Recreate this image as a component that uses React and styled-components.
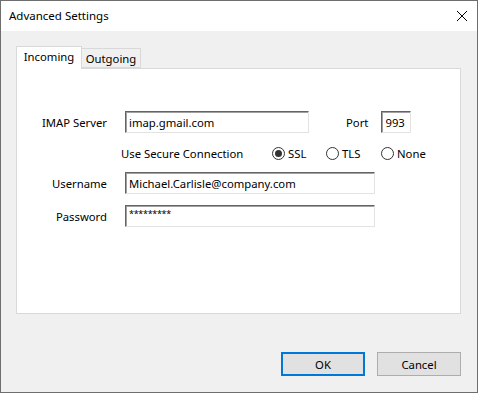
import React from "react";
import styled, { createGlobalStyle } from "styled-components";

const Global = createGlobalStyle`
  html, body { margin: 0; padding: 0; background: #ffffff; }
  * { box-sizing: border-box; }
  body { font-family: "Noto Sans", "Segoe UI", Arial, sans-serif; font-size: 11.3px; color: #000; }
`;

const Window = styled.div`
  width: 478px;
  height: 393px;
  border: 1px solid #6e6e6e;
  display: flex;
  flex-direction: column;
  background: #f0f0f0;
`;

const TitleBar = styled.div`
  height: 30px;
  background: #ffffff;
  display: flex;
  align-items: center;
  justify-content: space-between;
  padding: 0 9px 1px 8px;
  font-size: 11.5px;
`;

const Close = styled.div`
  width: 12px;
  height: 12px;
  display: flex;
  svg { display: block; }
`;

const Body = styled.div`
  flex: 1;
  display: flex;
  flex-direction: column;
  padding: 15px 16px 0 15px;
`;

const Tabs = styled.div`
  display: flex;
  align-items: flex-end;
  height: 22px;
`;

const Tab = styled.div`
  width: ${(p) => p.$w}px;
  height: ${(p) => (p.$active ? "23px" : "20px")};
  margin-bottom: ${(p) => (p.$active ? "-1px" : "0")};
  padding-bottom: ${(p) => (p.$active ? "3px" : "0")};
  border: 1px solid #d9d9d9;
  border-bottom: ${(p) => (p.$active ? "none" : "1px solid #d9d9d9")};
  border-left: ${(p) => (p.$active ? "1px solid #d9d9d9" : "none")};
  background: ${(p) => (p.$active ? "#ffffff" : "#f0f0f0")};
  display: flex;
  align-items: center;
  justify-content: center;
  position: relative;
  z-index: ${(p) => (p.$active ? 1 : 0)};
`;

const Panel = styled.div`
  height: 246px;
  background: #ffffff;
  border: 1px solid #d9d9d9;
  padding: 42px 0 0 0;
  display: flex;
  flex-direction: column;
`;

const Row = styled.div`
  display: flex;
  align-items: center;
  height: ${(p) => p.$h || 22}px;
  margin-top: ${(p) => p.$mt || 0}px;
`;

const Label = styled.div`
  width: 90px;
  margin-right: ${(p) => 18 + (p.$inset || 0)}px;
  text-align: right;
  white-space: nowrap;
`;

const Input = styled.div`
  width: ${(p) => p.$w}px;
  height: 22px;
  background: #fff;
  border-style: solid;
  border-width: 1px;
  border-color: #646464 #e3e3e3 #e3e3e3 #646464;
  box-shadow: inset 1px 1px 0 #a0a0a0;
  padding: 0 3px;
  display: flex;
  align-items: center;
  white-space: nowrap;
  overflow: hidden;
  margin-left: ${(p) => p.$ml || 0}px;
`;

const Masked = styled.span`
  font-size: 9px;
  letter-spacing: -0.3px;
  margin-top: -5px;
`;

const Text = styled.div`
  width: ${(p) => (p.$w ? `${p.$w}px` : "auto")};
  margin-left: ${(p) => p.$ml || 0}px;
  white-space: nowrap;
`;

const Radio = styled.div`
  width: ${(p) => (p.$w ? `${p.$w}px` : "auto")};
  display: flex;
  align-items: center;
  gap: 3px;
`;

const Circle = styled.span`
  width: 13px;
  height: 13px;
  border: 1px solid #333;
  border-radius: 50%;
  display: flex;
  align-items: center;
  justify-content: center;
  &::after {
    content: "";
    width: 7px;
    height: 7px;
    border-radius: 50%;
    background: ${(p) => (p.$on ? "#333" : "transparent")};
  }
`;

const Footer = styled.div`
  display: flex;
  justify-content: flex-end;
  gap: 12px;
  margin-top: 38px;
`;

const Button = styled.div`
  width: 84px;
  height: 24px;
  background: #e1e1e1;
  border: ${(p) => (p.$default ? "2px solid #0078d7" : "1px solid #adadad")};
  display: flex;
  align-items: center;
  justify-content: center;
`;

export default function App() {
  return (
    <>
      <Global />
      <Window>
        <TitleBar>
          <span>Advanced Settings</span>
          <Close>
            <svg width="12" height="12" viewBox="0 0 12 12">
              <path d="M1 1 L11 11 M11 1 L1 11" stroke="#000" strokeWidth="1" fill="none" />
            </svg>
          </Close>
        </TitleBar>
        <Body>
          <Tabs>
            <Tab $active $w={66}>Incoming</Tab>
            <Tab $w={59}>Outgoing</Tab>
          </Tabs>
          <Panel>
            <Row>
              <Label $inset={2}>IMAP Server</Label>
              <Input $w={184} $ml={-2}>imap.gmail.com</Input>
              <Text $ml={37}>Port</Text>
              <Input $w={30} $ml={13}>993</Input>
            </Row>
            <Row $mt={12} $h={16}>
              <Text $ml={104} $w={151}>Use Secure Connection</Text>
              <Radio $w={54}><Circle $on />SSL</Radio>
              <Radio $w={55}><Circle />TLS</Radio>
              <Radio><Circle />None</Radio>
            </Row>
            <Row $mt={11}>
              <Label>Username</Label>
              <Input $w={250}>Michael.Carlisle@company.com</Input>
            </Row>
            <Row $mt={11}>
              <Label>Password</Label>
              <Input $w={250}><Masked>*********</Masked></Input>
            </Row>
          </Panel>
          <Footer>
            <Button $default>OK</Button>
            <Button>Cancel</Button>
          </Footer>
        </Body>
      </Window>
    </>
  );
}
